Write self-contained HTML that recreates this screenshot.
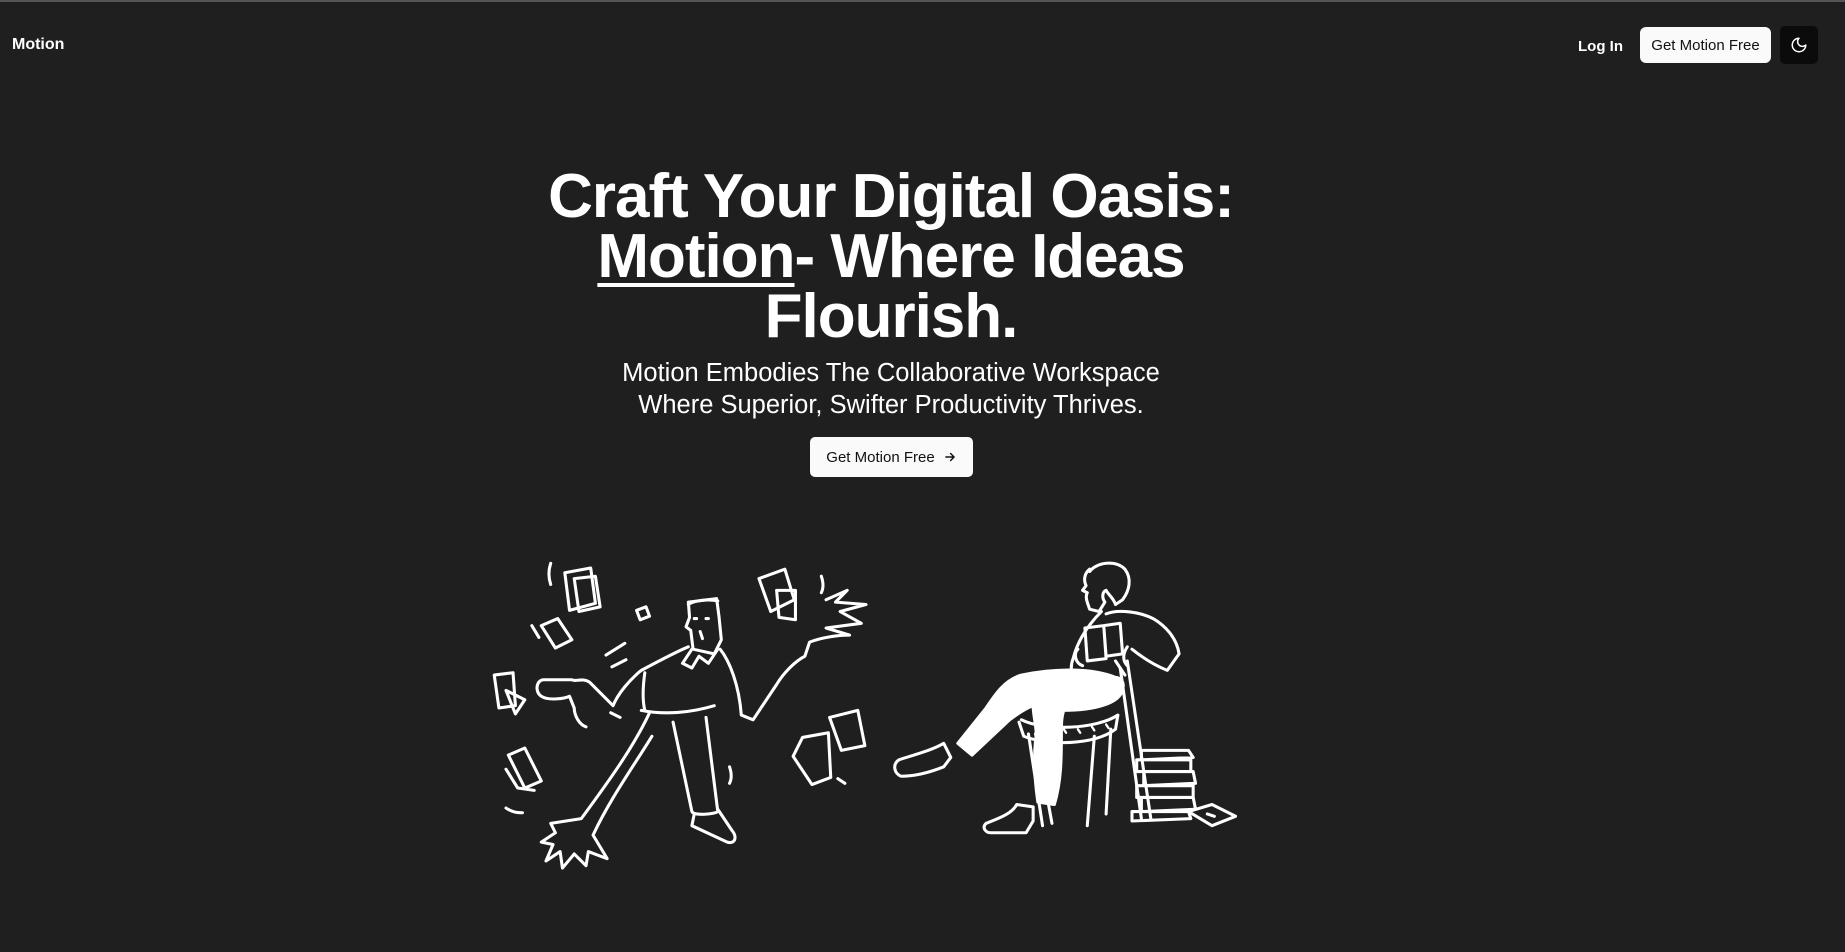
<!DOCTYPE html>
<html><head><meta charset="utf-8"><style>
*{margin:0;padding:0;box-sizing:border-box}
html,body{width:1845px;height:952px;overflow:hidden;background:#1f1f1f;font-family:"Liberation Sans",sans-serif;color:#fff}
body{border-top:2px solid #555;position:relative}
.logo{position:absolute;left:12px;top:34px;font-weight:bold;font-size:16px}
.login{position:absolute;left:1578px;top:36px;font-size:15px;font-weight:bold}
.btn{position:absolute;left:1640px;top:25px;width:131px;height:36px;background:#fafafa;color:#111;border-radius:6px;font-size:15px;display:flex;align-items:center;justify-content:center}
.moon{position:absolute;left:1780px;top:24px;width:38px;height:38px;background:#0b0b0b;border-radius:5px;display:flex;align-items:center;justify-content:center}
h1{position:absolute;left:0;width:1782px;top:165px;text-align:center;font-size:62px;line-height:60px;letter-spacing:-1px;font-weight:bold}
h1 u{text-decoration-thickness:4px;text-underline-offset:6px}
.sub{position:absolute;left:0;width:1782px;top:355px;text-align:center;font-size:25.5px;line-height:32px}
.cta{position:absolute;left:810px;top:435px;width:163px;height:40px;background:#fafafa;color:#111;border-radius:5px;font-size:15px;display:flex;align-items:center;justify-content:center;gap:8px}
svg.ill{position:absolute;left:0;top:0}
</style></head><body>
<div class="logo">Motion</div>
<div class="login">Log In</div>
<div class="btn">Get Motion Free</div>
<div class="moon"><svg width="18" height="18" viewBox="0 0 24 24" fill="none" stroke="#fff" stroke-width="2" stroke-linecap="round" stroke-linejoin="round"><path d="M12 3a6 6 0 0 0 9 9 9 9 0 1 1-9-9Z"/></svg></div>
<h1>Craft Your Digital Oasis:<br><u>Motion</u>- Where Ideas<br>Flourish.</h1>
<div class="sub">Motion Embodies The Collaborative Workspace<br>Where Superior, Swifter Productivity Thrives.</div>
<div class="cta">Get Motion Free <svg width="14" height="14" viewBox="0 0 24 24" fill="none" stroke="#111" stroke-width="2.5" stroke-linecap="round" stroke-linejoin="round"><path d="M5 12h14M13 6l6 6-6 6"/></svg></div>
<svg class="ill" width="1845" height="952" viewBox="0 0 1845 952">
<g transform="scale(1.1767)" fill="none" stroke="#fff" stroke-width="2.6" stroke-linecap="round" stroke-linejoin="round">
<!-- papers -->
<path d="M480 485l22-4 4 30-22 6z M488 490l18-2 4 26-18 4z"/>
<path d="M645 490l22-8 8 26-20 10z M660 500l16 0 0 25-14-2z"/>
<path d="M460 530l14-6 12 18-14 7z"/>
<path d="M541 517l8-3 3 8-8 3z"/>
<path d="M420 572l16-2 2 28-14 2z M430 585l16 8-8 12z"/>
<path d="M432 640l14-6 14 28-14 6z M430 652l10 16 14 2"/>
<path d="M705 608l24-6 6 30-20 4z M682 625l22-4 2 38-16 6-16-24z"/>
<path d="M468 477c-2 6-2 12 0 18 M452 530l6 10 M430 685c6 4 10 4 14 4 M698 488c2 6 2 10 0 14 M620 650c2 6 2 10 0 14 M712 660l6 4 M515 555l16-10 M520 565l12-6"/>
<!-- man -->
<path d="M585 510l24-3 2 15 2 20-6 12-18-4-2-16-4-3 3-8z"/>
<path d="M585 512c4-3 16-5 25-3"/>
<path d="M590 524h2 M600 524h2 M595 535l2 6"/>
<path d="M585 548c-10 4-25 12-40 20-10 8-20 20-24 30l-20-20c-6-4-12 0-15-2h-24c-6 0-8 10-2 14 6 4 20 2 24 0l4 10c0 6 4 14 10 16 M519 604l8 4 M548 570c-2 14-2 24 0 32 M612 550c8 10 16 30 18 56l10 4 20-30c6-10 16-20 24-24l4-12c10-4 24-6 34-6l-20-6 30-4-18-10 22-6-26-2 10-10-18 8"/>
<path d="M545 602c20 4 42 2 62-4"/>
<path d="M552 604c-14 30-36 60-58 90l-26 4 4 8-12 8 10 2-6 14 12-8 2 14 10-12 10 10 2-12 16 6-12-20c14-30 34-58 50-84 M572 612l16 76c2 4 20 2 22 0l-10-80 M590 690l-2 10 30 14c8 2 8-6 4-10l-12-18"/>
<path d="M588 550l-8 12 8 4 6-10 8 6 8-12"/>
<!-- woman head -->
<path d="M926 484c6-8 22-10 30-2 6 8 4 18-2 26l-6 4c-2-6-6-8-8-12-3 1-4 6-1 10l-5 8-8-2c-2-6-4-10-2-14l-4-2 3-4c-2-4-2-10 3-14z"/>
<!-- torso and arms -->
<path d="M936 518c-10 10-20 24-24 40-4 10 0 20 8 26 M940 520c10-4 28-2 40 4 10 6 20 16 22 30l-10 14c-10-4-20-10-30-18 M948 560l8 12"/>
<path d="M922 532l16-2 2 28-16 2z M938 530l14-2 2 26-14 2z"/>
<path d="M916 550c-4 4-2 12 4 14 M958 548c-4 6-4 12 0 16"/>
<!-- legs filled -->
<path fill="#fff" d="M948 574c-20-8-50-8-80-2-14 4-22 16-30 28l-24 30 12 10 32-30c8-6 14-10 20-12 0 10 4 20 2 30-2 20 0 38 2 52l14 2c6-20 6-40 6-60 0-8 0-14 2-20 26 0 48-6 50-18 2-6-2-10-6-10z"/>
<!-- feet -->
<path d="M802 630c-10 6-26 10-38 14-6 4-4 12 2 14 14 0 26-4 36-8l6-8z"/>
<path d="M864 682c-4 8-16 12-26 16-4 4 0 8 4 8h30l6-10 0-12z"/>
<!-- chair -->
<path d="M868 610c20 10 64 8 82-4 M866 612l4 12c20 8 60 8 78-6l2-12"/>
<path d="M874 622l12 78 M880 622l14 76 M930 624l-6 76 M944 618l-4 72 M952 566l18 128 M958 560l20 134"/>
<path d="M880 616l2 3 M892 618l2 3 M904 618l2 3 M916 618l2 3 M928 616l2 3 M940 614l2 3" stroke-width="2"/>
<!-- books -->
<path d="M970 636h40l4 6-44 2z M966 644h46v10h-46z M972 654h42l2 10-44 2z M966 666h48v10h-48z M970 676h44l2 10-46 2z M962 688h48l2 6-50 2z"/>
<path d="M1010 688l20-6 20 10-20 8z M1026 690l6 2"/>
</g>
</svg>
</body></html>
